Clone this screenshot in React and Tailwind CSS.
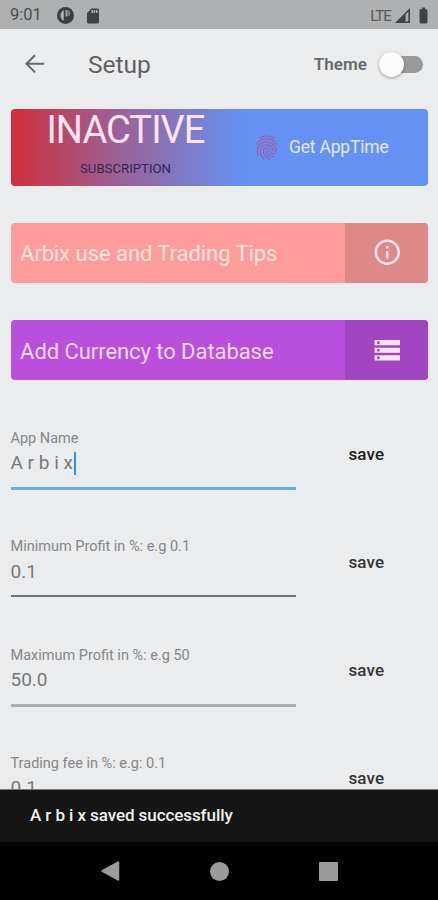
import React from "react";
import { MdBatteryFull, MdFingerprint, MdInfoOutline, MdSdCard, MdStorage } from "react-icons/md";

const fields = [
  { label: "App Name", value: "A r b i x", line: "h-[3px] bg-[#64aeea]", save: "text-[#1c1c1c]", focused: true },
  { label: "Minimum Profit in %: e.g 0.1", value: "0.1", line: "h-[2px] bg-[#707172]", save: "text-[#343535]" },
  { label: "Maximum Profit in %: e.g 50", value: "50.0", line: "h-[3px] bg-[#acadae]", save: "text-[#343535]" },
  { label: "Trading fee in %: e.g: 0.1", value: "0.1", line: "h-[2px] bg-[#707172]", save: "text-[#343535]" },
];

const StatusBar = () => (
  <div className="flex h-[29px] shrink-0 items-center bg-[#afb0b1] pt-[2px] pl-[10px] pr-[5px] text-[#404142]">
    <span className="w-[47px] text-[16.5px] leading-none text-[#4c4d4e]">9:01</span>
    <svg className="h-[17px] w-[17px]" viewBox="0 0 17 17">
      <circle cx="8.5" cy="8.5" r="8.5" fill="#3c3d3e" />
      <path d="M6.8 3.2 A6 6 0 0 0 5.6 13.2 L6.8 13.6 Z" fill="#afb0b1" />
      <path d="M8.4 3 H10.6 V9.4 H8.4 Z" fill="#a0a1a2" />
      <path d="M11.4 3.6 H13 V8.8 H11.4 Z" fill="#88898a" />
    </svg>
    <MdSdCard className="ml-[10px] h-[18px] w-[18px]" />
    <div className="ml-auto flex items-center">
      <span className="pt-px text-[15px] leading-none tracking-[-0.9px] text-[#58595a]">LTE</span>
      <svg className="ml-[4px] h-[15px] w-[15px]" viewBox="0 0 15 15">
        <path d="M0 15 L15 0 V15 Z" fill="#404142" />
        <path d="M10.6 6.4 L13.4 3.6 V13.4 H10.6 Z" fill="#afb0b1" />
      </svg>
      <MdBatteryFull className="ml-[4px] h-[19px] w-[19px]" />
    </div>
  </div>
);

const AppBar = () => (
  <div className="flex h-[79.5px] shrink-0 items-start pt-[20px] pl-[20px] pr-[15px] text-[#5c5d5e]">
    <svg className="h-[30px] w-[30px]" viewBox="0 0 30 30" fill="none" stroke="#666768" strokeWidth="2">
      <path d="M24.2 14.8 H7 M15 6.2 L6.4 14.8 L15 23.4" />
    </svg>
    <h1 className="ml-[38px] text-[24.5px] leading-[31px] text-[#5f6061]">Setup</h1>
    <span className="ml-auto pr-px text-[17px] leading-[30px] font-semibold tracking-[0.05px] text-[#68696a]">Theme</span>
    <div className="ml-[11px] flex h-[30px] w-[44px] items-center">
      <div className="h-[17px] w-full rounded-full bg-[#98999a]">
        <div className="-mt-[4px] h-[25px] w-[25px] rounded-full bg-[#fcfcfc] shadow-[0_1px_3px_rgba(0,0,0,0.35)]"></div>
      </div>
    </div>
  </div>
);

const SubscriptionCard = () => (
  <div className="flex h-[77px] shrink-0 rounded-[4px] bg-linear-to-r/srgb from-[#cf2f3c] from-0% via-[#99649a] via-[27%] to-[#6491f3] to-[56%]">
    <div className="flex w-[230px] flex-col items-center">
      <span className="text-[38px] leading-[43px] tracking-[-0.9px] text-[#ffe3f0]">INACTIVE</span>
      <span className="mt-[8px] text-[13.2px] leading-[18px] text-[#322451]">SUBSCRIPTION</span>
    </div>
    <div className="flex items-center pl-[11px]">
      <MdFingerprint className="h-[29px] w-[29px] text-[#a05cab]" />
      <span className="ml-[8.5px] pt-px text-[17.5px] tracking-[-0.2px] text-[#e2ecff]">Get AppTime</span>
    </div>
  </div>
);

const ActionButton = ({ label, icon: Icon, color, side, text }) => (
  <button className={`flex h-[60px] w-full shrink-0 overflow-hidden rounded-[4px] text-left ${color}`}>
    <span className={`flex h-full w-[334px] items-center pt-[2px] pl-[9.6px] text-[22px] tracking-[-0.06px] ${text}`}>{label}</span>
    <span className={`flex h-full flex-1 items-center justify-center pl-px ${side}`}>
      <Icon className="h-[30.5px] w-[30.5px] text-[#fbe6f0]" />
    </span>
  </button>
);

const Field = ({ label, value, line, save, focused }) => (
  <div className="flex h-[108.3px] shrink-0">
    <div className="w-[285px]">
      <div className="pt-[1px] text-[14.5px] leading-[18px] text-[#858687]">{label}</div>
      <div className="flex h-[31px] items-center text-[19px] text-[#777879]">
        <span>{value}</span>
        {focused && <span className="ml-px h-[23px] w-[2px] bg-[#2196f3]"></span>}
      </div>
      <div className={`mt-[8px] w-full ${line}`}></div>
    </div>
    <div className={`ml-[53px] pt-[14.5px] text-[17px] leading-[20px] font-medium tracking-[0.1px] ${save}`}>save</div>
  </div>
);

const NavBar = () => (
  <div className="flex h-[58px] shrink-0 items-center justify-center gap-[90px] bg-black">
    <svg className="h-[20px] w-[19px]" viewBox="0 0 19 20">
      <path d="M1 10 L17.5 1 V19 Z" fill="#9b9b9b" stroke="#9b9b9b" strokeWidth="1.5" strokeLinejoin="round" />
    </svg>
    <div className="h-[19px] w-[19px] rounded-full bg-[#9b9b9b]"></div>
    <div className="h-[19px] w-[19px] rounded-[1px] bg-[#9b9b9b]"></div>
  </div>
);

const App = () => {
  return (
    <div className="flex h-[900px] w-[438px] flex-col overflow-hidden bg-[#ebeced] font-['Roboto',sans-serif]">
      <StatusBar />
      <AppBar />
      <div className="flex min-h-0 flex-1 flex-col overflow-hidden pl-[10.5px] pr-[10px]">
        <SubscriptionCard />
        <div className="mt-[37px] flex flex-col gap-[37.5px]">
          <ActionButton
            label="Arbix use and Trading Tips"
            icon={MdInfoOutline}
            color="bg-[#ff9c9b]"
            side="bg-[#de8987]"
            text="text-[#ffe6e0]"
          />
          <ActionButton
            label="Add Currency to Database"
            icon={MdStorage}
            color="bg-[#b94fdc]"
            side="bg-[#a146c0]"
            text="text-[#f8dcff]"
          />
        </div>
        <div className="mt-[49px] flex flex-col">
          {fields.map((field) => (
            <Field key={field.label} {...field} />
          ))}
        </div>
      </div>
      {/* Snackbar */}
      <div className="flex h-[53px] shrink-0 items-center border-t border-[#777879] bg-[#161616] pl-[30px] text-[17px] font-medium tracking-[-0.08px] text-[#f0f0f0]">
        A r b i x saved successfully
      </div>
      <NavBar />
    </div>
  );
};

export default App;
